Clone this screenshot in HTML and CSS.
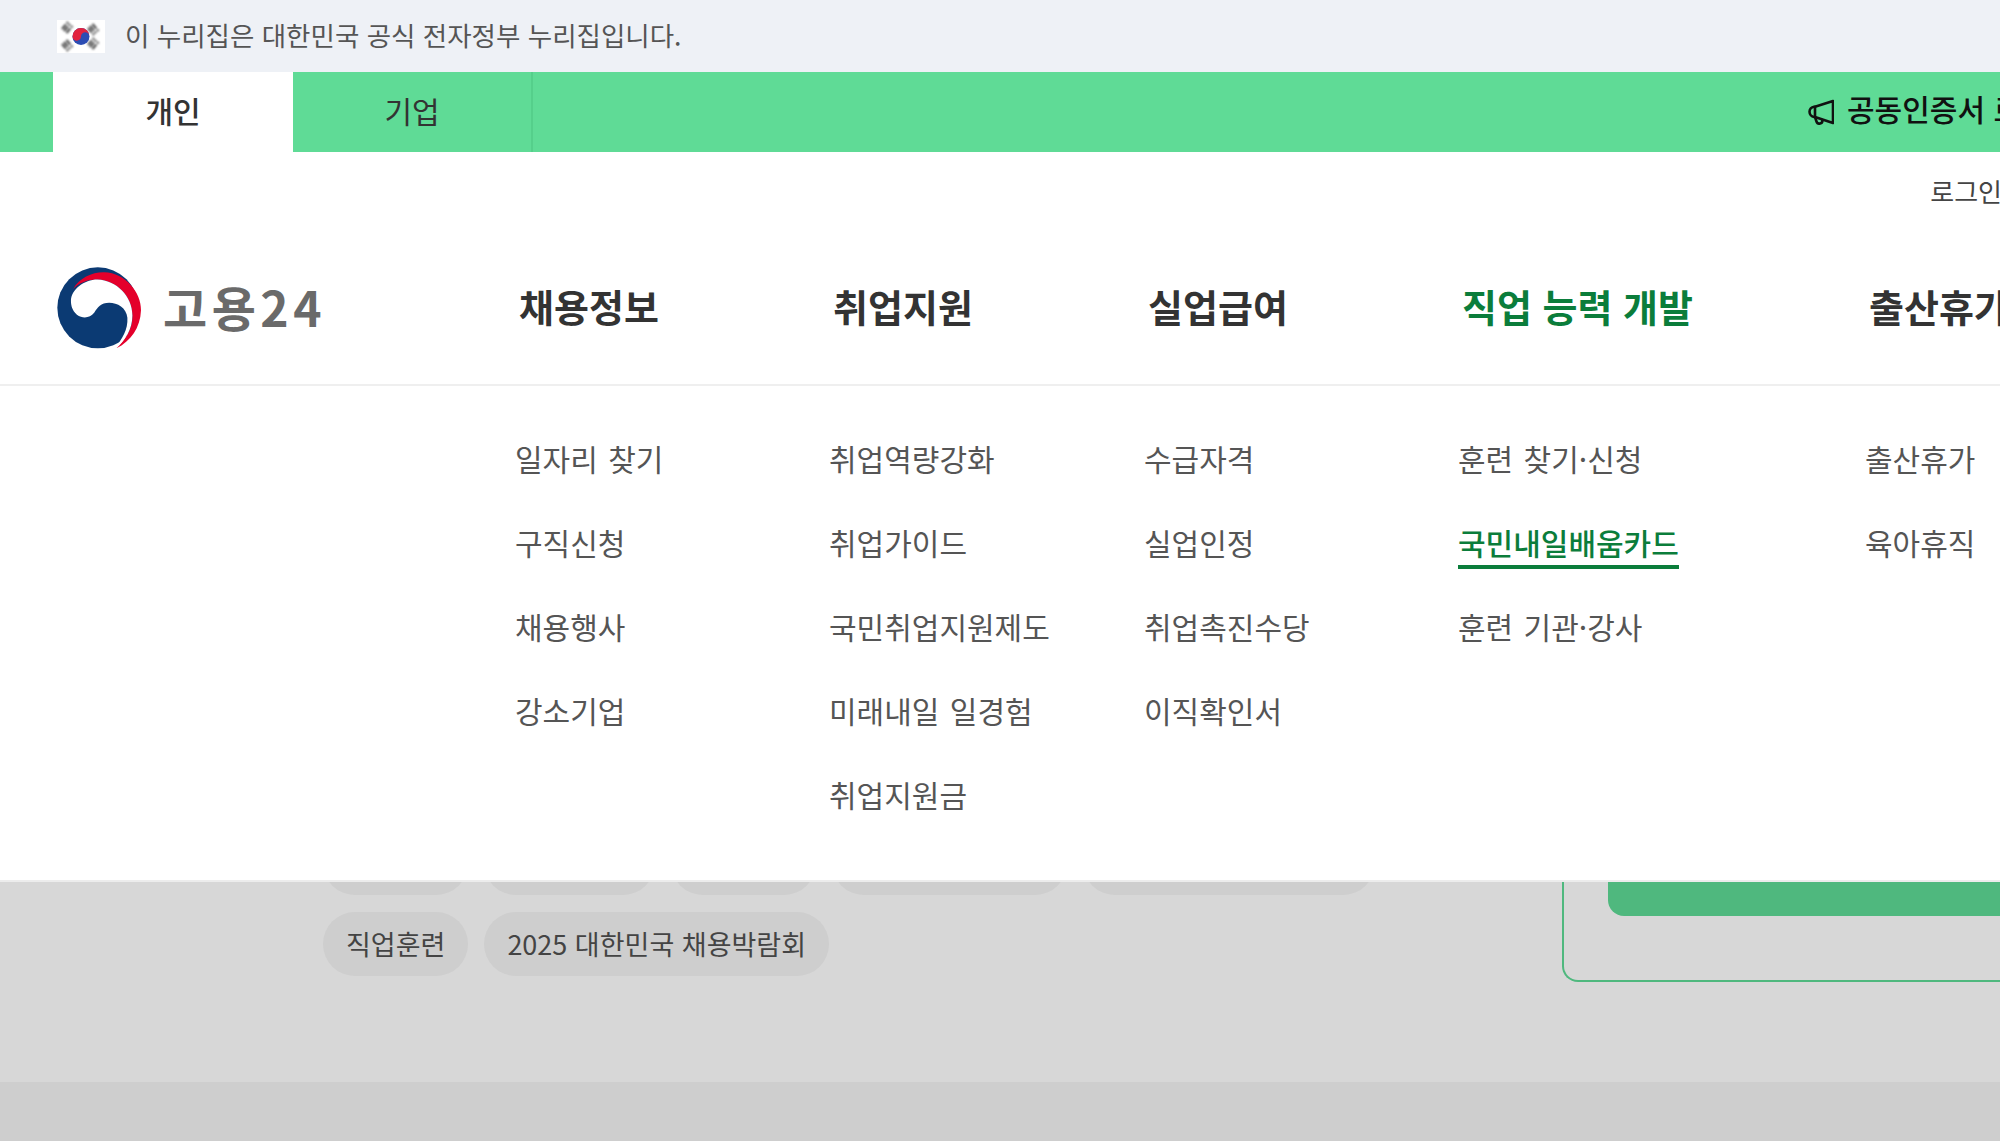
FILE: index.html
```html
<!DOCTYPE html>
<html lang="ko">
<head>
    <meta charset="UTF-8">
    <meta name="viewport" content="width=device-width, initial-scale=1.0">
    <title>고용24</title>
    <link rel="stylesheet" href="styles.css">
</head>
<body>
    <div class="gov-banner">
        <svg class="flag" viewBox="0 0 48 33" aria-hidden="true">
            <rect width="48" height="33" fill="#fff"/>
            <g class="flag-bars" fill="none" stroke="#444" stroke-width="2" stroke-dasharray="6 1.4">
                <path d="M7 11l6-7M9.5 13l6-7M5 9l6-7"/>
                <path d="M33 6l6 7M35.5 4l6 7M31 8l6 7"/>
                <path d="M7 22l6 7M9.5 20l6 7M5 24l6 7"/>
                <path d="M33 27l6-7M35.5 29l6-7M31 25l6-7"/>
            </g>
            <circle cx="24" cy="16.5" r="8.5" fill="#2b4cb3"/>
            <path d="M15.5 16.5a8.5 8.5 0 0 1 17 0c0-2.4-1.9-4.2-4.2-4.2s-4.3 1.9-4.3 4.2-1.9 4.2-4.2 4.2-4.3-1.8-4.3-4.2z" fill="#e2233f"/>
        </svg>
        <span class="gov-text">이 누리집은 대한민국 공식 전자정부 누리집입니다.</span>
    </div>

    <div class="tab-bar">
        <a class="tab active" href="#">개인</a>
        <a class="tab" href="#">기업</a>
        <div class="notice">
            <svg class="notice-icon" viewBox="0 0 26 26" aria-hidden="true">
                <path d="M25 2v22L7 18H6A5.2 5.2 0 0 1 6 7.7h1z" fill="none" stroke="#111" stroke-width="2.6" stroke-linejoin="round"/>
                <path d="M7 7.7V18M7 18l1.5 4.5a3 3 0 0 0 5.8-1.5" fill="none" stroke="#111" stroke-width="2.6" stroke-linecap="round"/>
            </svg>
            <span class="notice-text">공동인증서 로그인 안내</span>
        </div>
    </div>

    <main class="page">
        <div class="page-body">
            <div class="keywords">
                <div class="chip-row">
                    <span class="chip">채용정보</span>
                    <span class="chip">일자리찾기</span>
                    <span class="chip">실업급여</span>
                    <span class="chip">일학습 병행 안내</span>
                    <span class="chip">고용 안정 지원 장려금</span>
                </div>
                <div class="chip-row">
                    <span class="chip">직업훈련</span>
                    <span class="chip">2025 대한민국 채용박람회</span>
                </div>
            </div>
            <div class="side-card">
                <div class="side-btn"></div>
            </div>
        </div>
        <div class="page-foot"></div>

        <!-- 전체 메뉴 (본문 위에 펼쳐짐) -->
        <div class="gnb">
            <div class="util">로그인</div>
            <div class="gnb-head">
                <a class="logo" href="#">
                    <svg class="logo-mark" viewBox="80 83 262 248" aria-hidden="true">
                        <circle cx="206" cy="205" r="122" fill="#0b3a73"/>
                        <path d="M132 148C150 115 190 97 225 98C290 100 337 160 336 212C334 265 305 305 262 327C290 300 312 265 310 228C310 170 262 122 205 120C175 120 150 130 132 148Z" fill="#e4002b"/>
                        <path d="M125 185C125 150 165 120 205 120C262 122 310 170 310 228C310 268 290 305 255 328C280 300 297 270 295 235C292 205 265 190 240 190C215 190 205 205 195 220C185 232 170 237 155 232C138 226 125 208 125 185Z" fill="#fff"/>
                    </svg>
                    <span class="logo-text">고용24</span>
                </a>
                <nav class="gnb-titles">
                    <a class="gnb-title col-1" href="#">채용정보</a>
                    <a class="gnb-title col-2" href="#">취업지원</a>
                    <a class="gnb-title col-3" href="#">실업급여</a>
                    <a class="gnb-title col-4 current" href="#">직업 능력 개발</a>
                    <a class="gnb-title col-5" href="#">출산휴가·육아휴직</a>
                </nav>
            </div>
            <div class="gnb-menus">
                <ul class="menu col-1">
                    <li><a href="#">일자리 찾기</a></li>
                    <li><a href="#">구직신청</a></li>
                    <li><a href="#">채용행사</a></li>
                    <li><a href="#">강소기업</a></li>
                </ul>
                <ul class="menu col-2">
                    <li><a href="#">취업역량강화</a></li>
                    <li><a href="#">취업가이드</a></li>
                    <li><a href="#">국민취업지원제도</a></li>
                    <li><a href="#">미래내일 일경험</a></li>
                    <li><a href="#">취업지원금</a></li>
                </ul>
                <ul class="menu col-3">
                    <li><a href="#">수급자격</a></li>
                    <li><a href="#">실업인정</a></li>
                    <li><a href="#">취업촉진수당</a></li>
                    <li><a href="#">이직확인서</a></li>
                </ul>
                <ul class="menu col-4">
                    <li><a href="#">훈련 찾기·신청</a></li>
                    <li><a class="current" href="#">국민내일배움카드</a></li>
                    <li><a href="#">훈련 기관·강사</a></li>
                </ul>
                <ul class="menu col-5">
                    <li><a href="#">출산휴가</a></li>
                    <li><a href="#">육아휴직</a></li>
                </ul>
            </div>
        </div>
    </main>
</body>
</html>
```

FILE: styles.css
```css
* {
    margin: 0;
    padding: 0;
    box-sizing: border-box;
}

html, body {
    height: 1141px;
    overflow: hidden;
}

body {
    font-family: "Noto Sans CJK KR", "Noto Sans", sans-serif;
    color: #333;
    background: #cecece;
}

a {
    color: inherit;
    text-decoration: none;
}

ul {
    list-style: none;
}

/* 상단 공식 배너 */
.gov-banner {
    display: flex;
    align-items: center;
    gap: 20px;
    height: 72px;
    padding-left: 57px;
    background: #eef1f6;
    color: #555;
    font-size: 26.5px;
}

.gov-text {
    padding-bottom: 3px;
}

.flag {
    width: 48px;
    height: 33px;
}

.flag-bars {
    filter: blur(0.8px);
}

/* 개인/기업 탭 */
.tab-bar {
    display: flex;
    height: 80px;
    padding-left: 53px;
    background: #5fdb96;
    white-space: nowrap;
}

.tab {
    display: flex;
    flex: none;
    align-items: center;
    justify-content: center;
    width: 240px;
    padding-bottom: 4px;
    font-size: 30px;
    color: #333;
    border-right: 2px solid #55cf8b;
}

.tab.active {
    background: #fff;
    font-weight: 500;
    border-right: none;
}

.notice {
    display: flex;
    flex: none;
    align-items: center;
    gap: 13px;
    margin-left: auto;
    margin-right: -300px;
    width: 492px;
    font-size: 30px;
    font-weight: 500;
    color: #111;
}

.notice-text {
    padding-bottom: 8px;
}

.notice-icon {
    width: 26px;
    height: 26px;
    flex: none;
}

/* 메뉴 뒤쪽 본문 */
.page {
    position: relative;
    height: 989px;
}

.page-body {
    display: flex;
    justify-content: space-between;
    align-items: flex-end;
    height: 930px;
    padding: 0 0 100px 323px;
    background: #d7d7d7;
}

.page-foot {
    height: 59px;
}

.keywords {
    display: flex;
    flex-direction: column;
    gap: 17px;
    padding-bottom: 6px;
}

.chip-row {
    display: flex;
    gap: 16px;
}

.chip {
    display: flex;
    align-items: center;
    height: 64px;
    padding: 0 23px 2px;
    border-radius: 32px;
    background: #cecece;
    color: #444;
    font-size: 27px;
    white-space: nowrap;
}

.side-card {
    width: 438px;
    height: 300px;
    padding: 0 0 64px 44px;
    display: flex;
    align-items: flex-end;
    border: 2px solid #4fb87e;
    border-right: none;
    border-radius: 0 0 0 16px;
}

.side-btn {
    width: 100%;
    height: 100px;
    background: #4fb87e;
    border-radius: 0 0 0 16px;
}

/* 전체 메뉴 */
.gnb {
    position: absolute;
    top: 0;
    left: 0;
    width: 100%;
    height: 730px;
    background: #fff;
    border-bottom: 2px solid #ececec;
    white-space: nowrap;
}

.util {
    display: flex;
    justify-content: flex-end;
    height: 60px;
    margin-right: -2px;
    padding-top: 20px;
    font-size: 26px;
    color: #444;
}

.gnb-head {
    display: flex;
    align-items: center;
    height: 174px;
    padding-left: 56px;
    border-bottom: 2px solid #efefef;
}

.logo {
    display: flex;
    flex: none;
    align-items: center;
    gap: 20px;
    width: 463px;
    margin-top: 16px;
}

.logo-mark {
    width: 87px;
    height: 83px;
    flex: none;
    margin-top: 4px;
}

.logo-text {
    font-size: 48px;
    font-weight: 700;
    color: #6a6a6a;
    letter-spacing: 4.5px;
}

.gnb-titles {
    display: flex;
    flex: none;
    margin-top: 14px;
}

.gnb-title {
    flex: none;
    font-size: 38px;
    font-weight: 700;
    color: #333;
}

.gnb-title.current {
    color: #0b7d3b;
}

.col-1 { flex: none; width: 314px; }
.col-2 { flex: none; width: 315px; }
.col-3 { flex: none; width: 314px; }
.col-4 { flex: none; width: 407px; }
.col-5 { flex: none; width: 400px; }

.gnb-menus {
    display: flex;
    padding: 50px 0 0 515px;
}

.menu {
    display: flex;
    flex-direction: column;
    align-items: flex-start;
    gap: 40px;
    word-spacing: 2px;
}

.menu a {
    display: block;
    height: 44px;
    line-height: 44px;
    font-size: 30px;
    color: #555;
}

.menu a.current {
    color: #0b7d3b;
    font-weight: 500;
    border-bottom: 4px solid #0b7d3b;
    height: 49px;
    margin-bottom: -5px;
}
```
